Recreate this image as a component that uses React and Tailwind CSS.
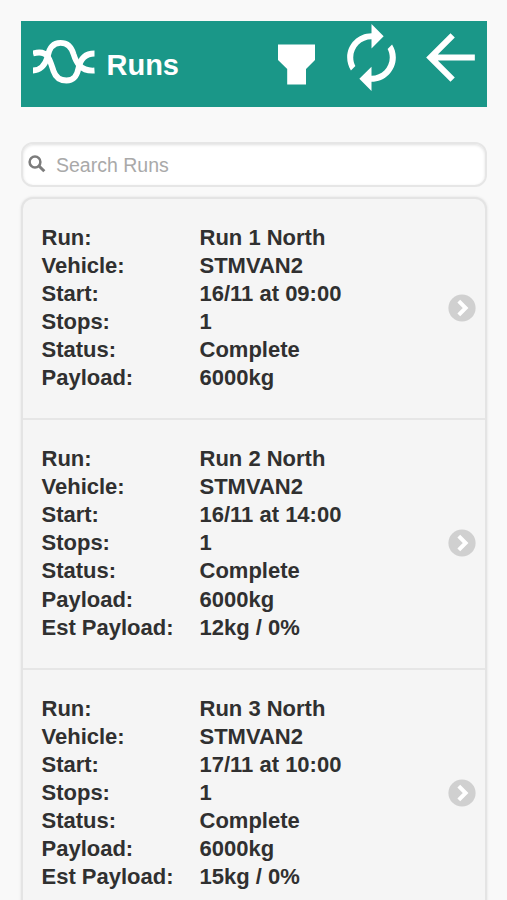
const runs = [
  {
    id: 1,
    fields: [
      ["Run:", "Run 1 North"],
      ["Vehicle:", "STMVAN2"],
      ["Start:", "16/11 at 09:00"],
      ["Stops:", "1"],
      ["Status:", "Complete"],
      ["Payload:", "6000kg"],
    ],
  },
  {
    id: 2,
    fields: [
      ["Run:", "Run 2 North"],
      ["Vehicle:", "STMVAN2"],
      ["Start:", "16/11 at 14:00"],
      ["Stops:", "1"],
      ["Status:", "Complete"],
      ["Payload:", "6000kg"],
      ["Est Payload:", "12kg / 0%"],
    ],
  },
  {
    id: 3,
    fields: [
      ["Run:", "Run 3 North"],
      ["Vehicle:", "STMVAN2"],
      ["Start:", "17/11 at 10:00"],
      ["Stops:", "1"],
      ["Status:", "Complete"],
      ["Payload:", "6000kg"],
      ["Est Payload:", "15kg / 0%"],
    ],
  },
];

function Logo() {
  return (
    <svg viewBox="0 0 62 46" className="w-[62px] h-[46px]" fill="none" stroke="#fff" strokeWidth="5.8">
      <path d="M0 14.5C7 12.5 12 13.5 15 18C17.5 22 18.5 26 20.5 32C22.5 38 27 41.5 33.5 41.5C41 41.5 44 37 45.5 29C47.5 19 53 14.5 61.5 14.5" />
      <path d="M0 31.5C8 31.5 12 26 14.5 18C16 9 20.5 3.8 27.5 3.8C35 3.8 38.5 8 40.5 15C43 23 47 32.5 61.5 31.5" />
    </svg>
  );
}

function HeaderActions() {
  return (
    <div className="flex items-start text-white">
      <button type="button" aria-label="Filter" className="pt-[23px] mr-[20px]">
        <svg viewBox="0 0 38 41" className="w-[38px] h-[41px]" fill="currentColor">
          <path d="M1 0.5H38V16L29 25V40.5H10.2V25L1 16z" />
        </svg>
      </button>
      <button type="button" aria-label="Refresh">
        <svg viewBox="0 0 24 24" className="w-[73px] h-[73px]" fill="currentColor">
          <path d="M12 6v3l4-4-4-4v3c-4.42 0-8 3.58-8 8 0 1.57.46 3.03 1.24 4.26L6.7 14.8c-.45-.83-.7-1.79-.7-2.8 0-3.31 2.69-6 6-6zm6.76 1.74L17.3 9.2c.44.84.7 1.79.7 2.8 0 3.31-2.69 6-6 6v-3l-4 4 4 4v-3c4.42 0 8-3.58 8-8 0-1.57-.46-3.03-1.24-4.26z" />
        </svg>
      </button>
      <button type="button" aria-label="Back" className="ml-[6px]">
        <svg viewBox="0 0 24 24" className="w-[73px] h-[73px]" fill="currentColor">
          <path d="M20 11H7.83l5.59-5.59L12 4l-8 8 8 8 1.41-1.41L7.83 13H20v-2z" />
        </svg>
      </button>
    </div>
  );
}

function SearchBox() {
  return (
    <label className="flex items-center h-[45px] mt-[35px] pl-[5.5px] rounded-[12px] border-2 border-[#e6e6e6] bg-white shadow-[inset_0_1px_3px_rgba(0,0,0,0.12)]">
      <svg viewBox="0 0 18 18" className="w-[18px] h-[18px] shrink-0" fill="none" stroke="#7c7c7c">
        <circle cx="7" cy="7" r="5.4" strokeWidth="2.5" />
        <path d="M11 11L16.3 16.3" strokeWidth="3" />
      </svg>
      <input
        type="text"
        placeholder="Search Runs"
        className="ml-[10px] mt-[2px] flex-1 min-w-0 text-[19.5px] leading-7 outline-none placeholder:text-[#a9a9a9]"
      />
    </label>
  );
}

function RunItem({ fields }) {
  return (
    <li className="flex items-center justify-between pl-[19px] pr-[9px] pt-[25px] pb-[26px] border-b-2 border-[#e6e6e6]">
      <dl className="grid grid-cols-[158px_auto] text-[22px] leading-[28.1px] font-bold text-[#303030]">
        {fields.map(([label, value]) => (
          <div key={label} className="contents">
            <dt>{label}</dt>
            <dd>{value}</dd>
          </div>
        ))}
      </dl>
      <svg viewBox="0 0 28 28" className="w-7 h-7 shrink-0">
        <circle cx="14" cy="14" r="13.6" fill="#d0d0d0" />
        <path d="M10.8 7.2L17.6 14L10.8 20.8" fill="none" stroke="#fff" strokeWidth="4" />
      </svg>
    </li>
  );
}

export default function App() {
  return (
    <div className="h-[900px] overflow-hidden bg-[#f9f9f9] px-[20.5px] pt-[20.5px] font-['Liberation_Sans',Arial,sans-serif]">
      <header className="flex justify-between h-[86px] bg-[#1a9788]">
        <div className="flex pl-[12px] pt-[18px]">
          <Logo />
          <h1 className="ml-[12px] mt-[7px] text-[29px] leading-[38px] font-bold text-white">Runs</h1>
        </div>
        <HeaderActions />
      </header>
      <SearchBox />
      <ul className="mt-[10px] rounded-t-[12px] border-2 border-[#e4e4e4] bg-[#f5f5f5] shadow-[0_0_3px_rgba(0,0,0,0.1)]">
        {runs.map((run) => (
          <RunItem key={run.id} fields={run.fields} />
        ))}
      </ul>
    </div>
  );
}
